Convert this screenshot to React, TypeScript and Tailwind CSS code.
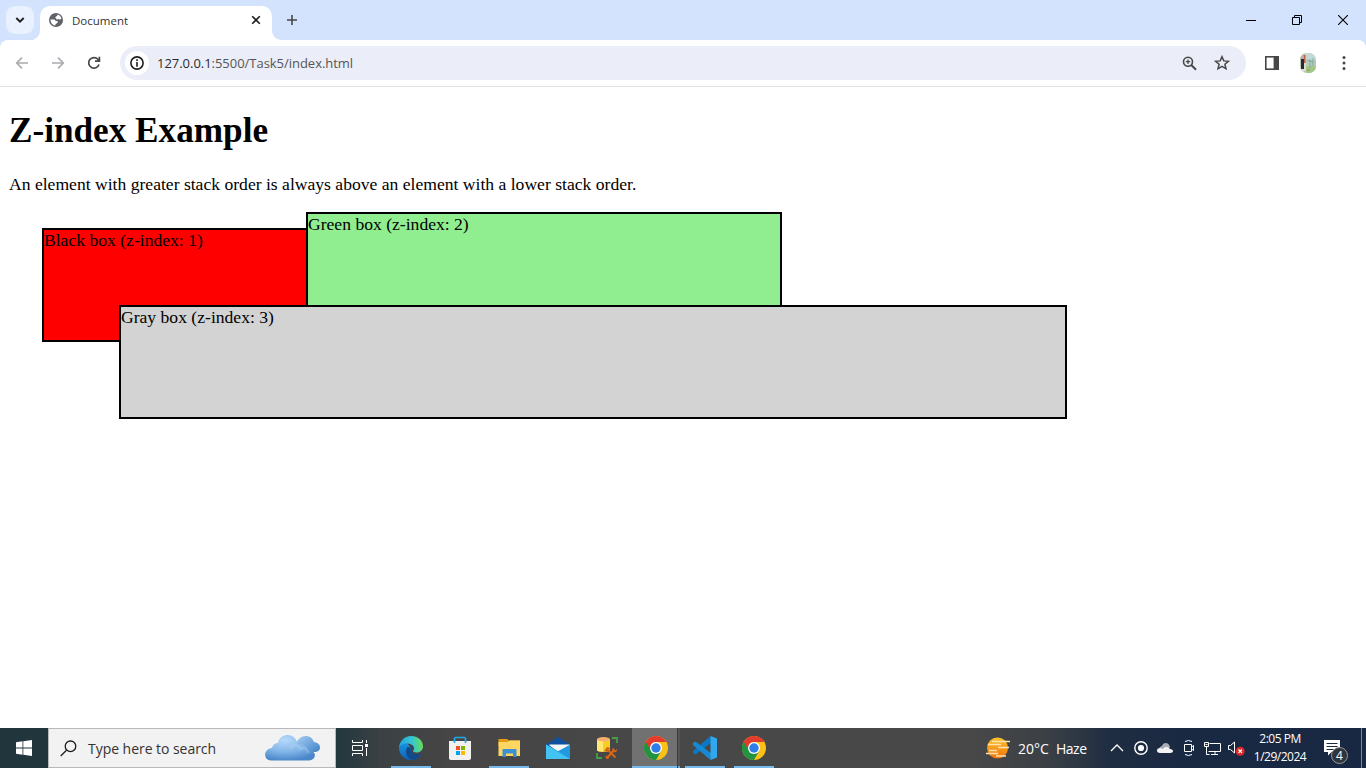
import type { ReactNode } from "react";

const ui = "font-['Open_Sans','Noto_Sans',sans-serif]";

function Globe() {
  return (
    <svg width="14" height="14" viewBox="0 0 14 14">
      <circle cx="7" cy="7" r="7" fill="#5f6368" />
      <path d="M8.500 1.600c2 .5 3.500 1.900 3.900 4.100-.6 1-1.700.8-2.400.5-.8-.4-1.200.5-2.200.2-.8-.3-.3-1-1-1.300-.8-.3-.7-1.100.1-1.400.9-.3 1.600-.9 1.600-2.100zM1.500 6.500h3.200c1.300 0 1.700.6 1.800 1.500h1.400c1.100.2 1.200 1.500.3 2-.9.500-1.700 1-2 2.400C3.300 12.100 1.400 9.500 1.500 6.500z" fill="#fff" />
    </svg>
  );
}

function TabStrip() {
  return (
    <div className="flex h-10 w-full items-start bg-[#d3e3fd]">
      <div className="ml-1.5 mt-1.5 flex size-7 items-center justify-center rounded-[9px] bg-[#e9f1fe]">
        <svg width="10" height="8" viewBox="0 0 10 8" fill="none" stroke="#1f1f1f" strokeWidth="1.9"><path d="M1.300 2 5 5.700 8.700 2" /></svg>
      </div>
      <svg className="mt-[30px] shrink-0" width="10" height="10" viewBox="0 0 10 10"><path d="M10 0v10H0C6 10 10 6 10 0z" fill="#fff" transform="translate(-4)" /><path d="M6 0h4v10H6z" fill="#fff" /></svg>
      <div className="-ml-1 mt-1.5 flex h-[34px] w-[232px] items-center rounded-t-[10px] bg-white pb-1.5 pl-[9px] pr-[11px]">
        <Globe />
        <span className="ml-[9px] mt-0.5 flex-1 text-[11.500px] leading-[16px] text-[#333]">Document</span>
        <svg width="10" height="10" viewBox="0 0 10 10" stroke="#1f1f1f" strokeWidth="1.600"><path d="m1.200 1.200 7.600 7.600m0-7.600L1.200 8.800" /></svg>
      </div>
      <svg className="mt-[30px]" width="10" height="10" viewBox="0 0 10 10"><path d="M0 0v10h10C4 10 0 6 0 0z" fill="#fff" /></svg>
      <svg className="ml-1 mt-[14px]" width="12" height="12" viewBox="0 0 12 12" stroke="#474747" strokeWidth="1.600"><path d="M6 1v10M1 6h10" /></svg>
      <div className="ml-auto flex h-10 items-center">
        <div className="flex w-[46px] justify-center"><svg width="10" height="10" viewBox="0 0 10 10" stroke="#000"><path d="M0 5.500h10" /></svg></div>
        <div className="flex w-[46px] justify-center"><svg width="11" height="11" viewBox="0 0 11 11" fill="none" stroke="#000"><path d="M.5 2.500h7v7h-7zM2.500 2.500v-2h7v7h-2" /></svg></div>
        <div className="flex w-[46px] justify-center"><svg width="10" height="10" viewBox="0 0 10 10" stroke="#000" strokeWidth="1.100"><path d="m0 0 10 10M10 0 0 10" /></svg></div>
      </div>
    </div>
  );
}

function Toolbar() {
  return (
    <div className="h-[47px] bg-[#d3e3fd]">
      <div className="flex h-[47px] items-center rounded-t-[8px] border-b border-[#dfe1e5] bg-white">
        <svg className="ml-[15px]" width="14" height="14" viewBox="0 0 14 14" fill="none" stroke="#a9abae" strokeWidth="1.600"><path d="M13 7H2M7 1.600 1.700 7 7 12.400" /></svg>
        <svg className="ml-[22px]" width="14" height="14" viewBox="0 0 14 14" fill="none" stroke="#a9abae" strokeWidth="1.600"><path d="M1 7h11M7 1.600 12.300 7 7 12.400" /></svg>
        <svg className="ml-[22px]" width="14" height="14" viewBox="0 0 14 14" fill="none" stroke="#444746" strokeWidth="1.700"><path d="M12 8.500A5.300 5.300 0 1 1 10.900 3.300L12.400 5" /><path d="M12.400.8V5.200H8" /></svg>
        <div className="ml-[19px] flex h-[34px] w-[1126px] items-center rounded-full bg-[#ebeef8] pl-[5px] pr-4">
          <div className="flex size-6 items-center justify-center rounded-full bg-white">
            <svg width="14" height="14" viewBox="0 0 14 14"><circle cx="7" cy="7" r="6.100" fill="none" stroke="#1f1f1f" strokeWidth="1.600" /><path d="M6.200 3.300h1.600v1.600H6.200zM6.200 6.100h1.600v4.600H6.200z" fill="#1f1f1f" /></svg>
          </div>
          <span className="ml-2 flex-1 text-[13px] leading-[18px] tracking-[-0.03px] text-[#555]"><span className="text-[#2b2b2b]">127.0.0.1</span>:5500/Task5/index.html</span>
          <svg width="15" height="15" viewBox="0 0 15 15" fill="none" stroke="#474747"><circle cx="6" cy="5.700" r="4.500" strokeWidth="1.600" /><path d="m9.300 9 4.700 4.700" strokeWidth="2" /><path d="M6 3.500v4.400M3.800 5.700h4.400" strokeWidth="1.300" /></svg>
          <svg className="ml-[17px]" width="16" height="16" viewBox="0 0 16 16" fill="none" stroke="#474747" strokeWidth="1.500"><path d="m8 1.700 1.800 4.200 4.600.4-3.500 3 1.100 4.500L8 11.400l-4 2.400 1.100-4.500-3.500-3 4.600-.4z" /></svg>
        </div>
        <svg className="ml-[19px]" width="14" height="14" viewBox="0 0 14 14"><rect x=".8" y=".8" width="12.400" height="12.400" fill="#fff" stroke="#474747" strokeWidth="1.600" /><path d="M8.600 0H14v14H8.600z" fill="#474747" /></svg>
        <svg className="ml-[21px]" width="16" height="20" viewBox="0 0 16 20">
          <defs><clipPath id="avatar"><rect width="16" height="20" rx="7" /></clipPath></defs>
          <g clipPath="url(#avatar)"><path fill="#b3cdb5" d="M0 0h16v20H0z" /><path fill="#c5d9d4" d="M5 0h11v7H5z" /><path fill="#b9aea4" d="M0 0h4v7H0z" /><path fill="#292a31" d="M1 6h3v10H1z" /><path fill="#c55c48" d="M4 2h1.500v8H4z" /><path fill="#dedbd6" d="M4 10h2v8H4zM0 16h4v4H0z" /><path fill="#a3c883" d="M6 13h10v7H6z" /><path fill="#ad9c83" d="M7 16h3v2H7z" /><path d="M10 6v9M7 7l6 2M13 5v8" stroke="#679ca1" strokeWidth=".7" /></g>
        </svg>
        <svg className="ml-[26px]" width="4" height="16" viewBox="0 0 4 16" fill="#474747"><circle cx="2" cy="2.500" r="1.500" /><circle cx="2" cy="8" r="1.500" /><circle cx="2" cy="13.500" r="1.500" /></svg>
      </div>
    </div>
  );
}

function Page() {
  return (
    <main className="relative flex-1 overflow-hidden bg-white pl-[9px] font-['Liberation_Serif',serif] text-[17.600px] leading-[20px] text-black">
      <h1 className="mt-6 text-[35.200px] font-bold leading-[40px]">Z-index Example</h1>
      <p className="mt-[23px]">An element with greater stack order is always above an element with a lower stack order.</p>
      <div className="absolute left-[42px] top-[141px] z-[1] h-[114px] w-[700px] border-2 border-black bg-[red]">Black box (z-index: 1)</div>
      <div className="absolute left-[306px] top-[125px] z-[2] h-[114px] w-[476px] border-2 border-black bg-[#90ee90]">Green box (z-index: 2)</div>
      <div className="absolute left-[119px] top-[218px] z-[3] h-[114px] w-[948px] border-2 border-black bg-[#d3d3d3]">Gray box (z-index: 3)</div>
    </main>
  );
}

function Chrome() {
  return (
    <svg width="24" height="24" viewBox="0 0 24 24">
      <circle cx="12" cy="12" r="12" fill="#fbc116" />
      <path d="M1.600 6A12 12 0 0 0 12 24l5.200-9L12 12z" fill="#229342" />
      <path d="M1.600 6A12 12 0 0 1 22.400 6H12a6 6 0 0 0-5.200 9z" fill="#e33b2e" />
      <path d="M1.600 6 6.800 15 12 18l-4 4A12 12 0 0 1 1.600 6z" fill="#229342" />
      <circle cx="12" cy="12" r="6" fill="#fff" /><circle cx="12" cy="12" r="4.700" fill="#2f7de9" />
    </svg>
  );
}

function Edge() {
  return (
    <svg width="24" height="24" viewBox="0 0 24 24">
      <defs>
        <linearGradient id="edgeTop" x1="0" y1=".5" x2="1" y2=".4"><stop stopColor="#249fe0" /><stop offset=".55" stopColor="#35c5d4" /><stop offset="1" stopColor="#69df4f" /></linearGradient>
        <linearGradient id="edgeSide" x1="0" y1="0" x2="0" y2="1"><stop stopColor="#1c93dc" /><stop offset="1" stopColor="#0b62b8" /></linearGradient>
      </defs>
      <path d="M0 12A12 12 0 0 0 12 24c4.500 0 8-2.300 10-5.500-6 2.600-11-1-10-6.500L8 7C4 6 0 8 0 12z" fill="url(#edgeSide)" />
      <path d="M8.500 11c-3 4-1.500 11 4.500 12.900 4-.1 7.200-2.200 9-5.400.3-.6-.1-.9-.7-.6-5.500 2.500-10.800-1-9.300-6.400z" fill="#114a8b" />
      <path d="M0 12C.2 5 5.500 0 12 0c7 0 12 4.800 12 10.300 0 4-3 6.300-6.300 6.300-3 0-4.200-1-3.400-2 1.200-1.400 1-3.900-.8-5.300C9.500 6.200 1.500 7 0 12z" fill="url(#edgeTop)" />
    </svg>
  );
}

function Store() {
  return (
    <svg width="24" height="24" viewBox="0 0 24 24">
      <path d="M1 5h22v17c0 1.200-.8 2-2 2H3c-1.200 0-2-.8-2-2z" fill="#f1f1f1" />
      <path d="M6.500 7V2.500c0-.6.400-1 1-1h9c.6 0 1 .4 1 1V7" fill="none" stroke="#22a7e5" strokeWidth="1.700" />
      <path d="M8 10h4v4H8z" fill="#f25022" /><path d="M13 10h4v4h-4z" fill="#7fba00" /><path d="M8 15h4v4H8z" fill="#00a4ef" /><path d="M13 15h4v4h-4z" fill="#ffb900" />
    </svg>
  );
}

function Explorer() {
  return (
    <svg width="24" height="24" viewBox="0 0 24 24">
      <path d="M1.500 3h9l1 1.500H23V10H1.500z" fill="#e59d10" /><path d="M1.500 6h9l2-1.500H23V20H1.500z" fill="#ffd662" />
      <path d="M5.500 14c0-.6.400-1 1-1h12c.6 0 1 .4 1 1v7h-3.500v-3.500H9V21H5.500z" fill="#3c91d6" />
    </svg>
  );
}

function Mail() {
  return (
    <svg width="24" height="24" viewBox="0 0 24 24">
      <path d="M0 8.500 12 1l12 7.500v3H0z" fill="#0f509f" /><path d="M3 9h21v7H12z" fill="#f1f5f8" />
      <path d="M0 8.500 12 15l12-6.500V23H0z" fill="#2199df" /><path d="M12 15 3 8.500h21z" fill="#f4f6f8" /><path d="M0 8.500 24 23H0z" fill="#42c3f3" />
    </svg>
  );
}

function Database() {
  return (
    <svg width="24" height="24" viewBox="0 0 24 24">
      <path d="M2 3v11c0 2.500 13 2.500 13 0V3z" fill="#f9ce24" /><path d="M2 3v11c0 1 2 1.600 6 1.700V5z" fill="#ffe774" />
      <ellipse cx="8.500" cy="3.200" rx="6.500" ry="2.200" fill="#f4af70" />
      <path d="M17 2h5v5M2 17v5h5" fill="none" stroke="#45a047" strokeWidth="1.800" />
      <path d="m12.500 21.500 7-8M12.500 13.500l8 8" stroke="#d96615" strokeWidth="2" /><path d="m9 15 3-4 3.500 1-3.500 3.500zM18 11.500l1 2 2 1 1-2v2.500l-2 1.500-3-2zM11 19.500l2 1 1 2-2 .5-1.500-1z" fill="#d96615" />
    </svg>
  );
}

function VSCode() {
  return (
    <svg width="24" height="24" viewBox="0 0 24 24">
      <path d="M17.500 0 18 7 2.300 18.500 0 17v-2z" fill="#0c78c5" />
      <path d="M17.500 24 18 17 2.300 5.500 0 7v2z" fill="#168bd3" />
      <path d="M17.500 0 24 2.500v19L17.500 24z" fill="#30a7ef" />
    </svg>
  );
}

function TaskApp({ children, running = false, active = false }: { children: ReactNode; running?: boolean; active?: boolean }) {
  return (
    <div className={active ? "mr-px flex h-10 w-12 bg-[#545454]" : "mr-px flex h-10 w-12"}>
      <div className={active ? "flex h-10 w-[45px] flex-col items-center bg-[#717171] pl-[3px] shadow-[inset_0_-2px_0_#76b9ed]" : "flex h-10 w-full flex-col items-center"}>
        <div className="flex h-[38px] items-center pt-0.5">{children}</div>
        {running && !active && <div className="h-0.5 w-10 bg-[#76b9ed]" />}
      </div>
      {active && <div className="h-10 w-[3px] border-l border-[#3e3e3e] shadow-[inset_0_-2px_0_#6ca9d9]" />}
    </div>
  );
}

function Clouds() {
  return (
    <svg width="56" height="26" viewBox="0 0 56 26">
      <defs><radialGradient id="cloudA" cx=".4" cy=".2" r=".8"><stop stopColor="#b5dafa" /><stop offset=".6" stopColor="#7fb3e6" /><stop offset="1" stopColor="#4b88cb" /></radialGradient><linearGradient id="cloudB" x1="0" y1="0" x2="1" y2="1"><stop stopColor="#a5cff5" /><stop offset="1" stopColor="#4382c6" /></linearGradient></defs>
      <path d="M31 10C33-1 46-2 49 7c8 1 8 10 0 10H34z" fill="url(#cloudB)" />
      <path d="M6 25.500C-2 25-2 14 7 13c1-4 4-5 6-5C15-3 31-3 33 10c5-2 10 1 10 5 9 0 9 10 1 10.500z" fill="url(#cloudA)" />
      <path d="M25 14c3-5 9-5 10 0 4-2 8 0 8 4" fill="none" stroke="#b2d4f4" strokeWidth="2.500" opacity=".35" />
    </svg>
  );
}

function Taskbar() {
  return (
    <footer className="flex h-10 items-center bg-[linear-gradient(90deg,#20353c_0px,#22373e_338px,#3b4144_380px,#474545_450px,#484848_700px,#484848_970px,#3b4045_1045px,#1f2d42_1110px,#1a2942_1180px,#182843_1366px)] text-white">
      <div className="flex w-12 justify-center"><svg width="16" height="16" viewBox="0 0 16 16" fill="#fff"><path d="m0 2.200 6.500-.9v6.300H0zM7.300 1.200 16 0v7.600H7.300zM0 8.400h6.500v6.300L0 13.800zM7.300 8.400H16V16l-8.700-1.200z" /></svg></div>
      <div className="flex h-10 w-72 items-center border border-[#b8b8b8] bg-[#f2f2f2] pl-[11px] pr-[14px]">
        <svg width="17" height="17" viewBox="0 0 17 17" fill="none" stroke="#1f1f1f" strokeWidth="1.300"><circle cx="10.500" cy="6.300" r="5.300" /><path d="M6.500 10.200.7 16" /></svg>
        <span className="ml-[11px] mt-px flex-1 whitespace-nowrap text-[14px] leading-5 tracking-[-0.04px] text-[#333]">Type here to search</span>
        <Clouds />
      </div>
      <div className="mr-[3px] flex w-12 justify-center"><svg width="16" height="16" viewBox="0 0 16 16" fill="none" stroke="#fff"><path d="M.5 0v2.500h10V0M.5 5.500h10v5H.5zM.5 16v-2.500h10V16M14.500 0v3M14.500 8v8" /><path d="M13 4h3v3h-3z" fill="#fff" stroke="none" /></svg></div>
      <TaskApp running><Edge /></TaskApp>
      <TaskApp><Store /></TaskApp>
      <TaskApp running><Explorer /></TaskApp>
      <TaskApp><Mail /></TaskApp>
      <TaskApp><Database /></TaskApp>
      <TaskApp active running><Chrome /></TaskApp>
      <TaskApp running><VSCode /></TaskApp>
      <TaskApp running><Chrome /></TaskApp>
      <div className="ml-auto flex h-10 w-[381px] items-center">
        <svg className="ml-px" width="25" height="22" viewBox="0 0 25 22"><defs><linearGradient id="sun" x1="0" y1="0" x2="0" y2="1"><stop stopColor="#ffc42a" /><stop offset="1" stopColor="#f0730c" /></linearGradient></defs><circle cx="11.500" cy="11" r="10.500" fill="url(#sun)" /><path d="M6 4.500h18M2 7.500h13M12 10.500h11M3 13.500h8M0 16.500h12M10 19h10" stroke="#ffe4b0" strokeWidth="1.500" /></svg>
        <span className="ml-[7px] mt-px w-[38px] text-[14px] leading-5">20°C</span>
        <span className="mt-px w-[54px] text-[14px] leading-5 tracking-[-0.5px]">Haze</span>
        <svg width="14" height="8" viewBox="0 0 14 8" fill="none" stroke="#fff" strokeWidth="1.300"><path d="m1 7 6-6 6 6" /></svg>
        <svg className="ml-[10px]" width="14" height="14" viewBox="0 0 14 14"><circle cx="7" cy="7" r="6.200" fill="none" stroke="#fff" strokeWidth="1.400" /><circle cx="7" cy="7" r="3.100" fill="#fff" /></svg>
        <svg className="ml-[9px]" width="16" height="10" viewBox="0 0 16 10"><path d="M2 7C2 4 4 3 5 3c1-4 7-4 8 1l-5 5z" fill="#a8adb6" /><path d="M3 10C-1 10-1 5 3 5l3 1c2-3 6-2 7 0 4 0 4 4 0 4z" fill="#f3f3f3" /></svg>
        <svg className="ml-[10px]" width="12" height="16" viewBox="0 0 12 16" fill="none" stroke="#fff"><path d="M2 1.500q3.500-2 7 0M2 14.500q3.500 2 7 0M1.500 4.500h7v7h-7zM8.500 7l2-1.500v5L8.500 9" /></svg>
        <svg className="ml-[9px]" width="17" height="15" viewBox="0 0 17 15" fill="none" stroke="#fff"><path d="M5.500 2.500h11v8h-12M11 10.500v3M7 13.500h7M.5 1.500h4v4h-4zM2.500 5.500v8h3M1.500 3.500h2" /></svg>
        <svg className="ml-[7px]" width="17" height="15" viewBox="0 0 17 15"><path d="M.5 4.500h2l4-3.500v11l-4-3.500h-2z" fill="none" stroke="#fff" /><circle cx="12.200" cy="10.200" r="4.500" fill="#dc2929" /><path d="m10.500 8.500 3.400 3.400m0-3.400-3.400 3.400" stroke="#fff" strokeWidth="1.200" /></svg>
        <div className="ml-[5px] flex w-[60px] flex-col items-center text-[12px] leading-[18px] tracking-[-0.5px]"><span>2:05 PM</span><span>1/29/2024</span></div>
        <div className="relative ml-[14px] mt-2 h-6 w-[25px]">
          <svg width="16" height="17" viewBox="0 0 16 17"><path d="M0 0h16v12H7.500L4 15.500V12H0z" fill="#fff" /><path d="M2.500 3.500h11M2.500 6.500h11M2.500 9.500h7" stroke="#1b2941" /></svg>
          <div className="absolute left-[7px] top-[7px] flex size-[17px] items-center justify-center rounded-full border border-[#999] bg-[#30343c] text-[12px] leading-none">4</div>
        </div>
        <div className="ml-auto mr-1 h-10 w-px bg-[#7b8492]" />
      </div>
    </footer>
  );
}

export default function App() {
  return (
    <div className={`flex h-screen w-full flex-col overflow-hidden bg-white ${ui}`}>
      <TabStrip />
      <Toolbar />
      <Page />
      <Taskbar />
    </div>
  );
}
